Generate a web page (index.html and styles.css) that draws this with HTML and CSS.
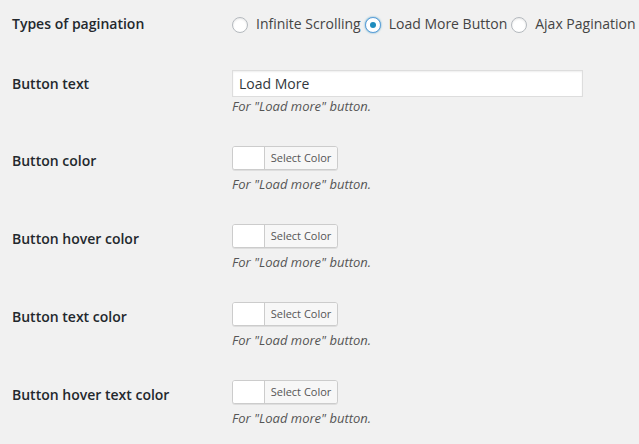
FILE: index.html
```html
<!DOCTYPE html>
<html>
<head>
<meta charset="utf-8">
<link rel="stylesheet" href="styles.css">
</head>
<body>
<div class="form-table">
  <div class="row row-first">
    <div class="th">Types of pagination</div>
    <div class="td radios">
      <label class="opt"><span class="radio"></span>Infinite Scrolling</label>
      <label class="opt"><span class="radio checked"></span>Load More Button</label>
      <label class="opt"><span class="radio"></span>Ajax Pagination</label>
    </div>
  </div>
  <div class="row row-text">
    <div class="th">Button text</div>
    <div class="td">
      <div class="input">Load More</div>
      <p class="description">For "Load more" button.</p>
    </div>
  </div>
  <div class="row row-color">
    <div class="th">Button color</div>
    <div class="td">
      <div class="color-result"><span class="swatch"></span><span class="btn-label">Select Color</span></div>
      <p class="description">For "Load more" button.</p>
    </div>
  </div>
  <div class="row row-color">
    <div class="th">Button hover color</div>
    <div class="td">
      <div class="color-result"><span class="swatch"></span><span class="btn-label">Select Color</span></div>
      <p class="description">For "Load more" button.</p>
    </div>
  </div>
  <div class="row row-color">
    <div class="th">Button text color</div>
    <div class="td">
      <div class="color-result"><span class="swatch"></span><span class="btn-label">Select Color</span></div>
      <p class="description">For "Load more" button.</p>
    </div>
  </div>
  <div class="row row-color">
    <div class="th">Button hover text color</div>
    <div class="td">
      <div class="color-result"><span class="swatch"></span><span class="btn-label">Select Color</span></div>
      <p class="description">For "Load more" button.</p>
    </div>
  </div>
</div>
</body>
</html>
```
FILE: styles.css
```css
html, body {
  margin: 0;
  padding: 0;
  background: #f1f1f1;
  font-family: "Open Sans", "Noto Sans", sans-serif;
  font-size: 14px;
  color: #444;
}
.form-table {
  padding-left: 12px;
}
.row {
  display: flex;
  align-items: flex-start;
}
.th {
  width: 220px;
  flex: none;
  padding-top: 15px;
  line-height: 18px;
  font-weight: 600;
  color: #23282d;
}
.td {
  flex: 1;
  padding-top: 10px;
}
.row-first {
  height: 60px;
}
.row-first .td {
  padding-top: 15px;
}
.radios {
  display: flex;
  align-items: center;
  height: 18px;
}
.opt {
  display: flex;
  align-items: center;
  line-height: 18px;
  margin-right: 4px;
  white-space: nowrap;
}
.radio {
  box-sizing: border-box;
  width: 16px;
  height: 16px;
  border-radius: 50%;
  border: 1px solid #b4b9be;
  background: #fff;
  box-shadow: inset 0 1px 2px rgba(0,0,0,0.1);
  margin-right: 8px;
  margin-top: 1px;
  position: relative;
  flex: none;
}
.radio.checked {
  border-color: #5b9dd9;
  box-shadow: 0 0 2px rgba(30,140,190,0.8);
}
.radio.checked::before {
  content: "";
  position: absolute;
  left: 4px;
  top: 4px;
  width: 6px;
  height: 6px;
  border-radius: 50%;
  background: #1e8cbe;
}
.row-text {
  height: 76px;
}
.input {
  box-sizing: border-box;
  width: 351px;
  height: 27px;
  border: 1px solid #ddd;
  background: #fff;
  box-shadow: inset 0 1px 2px rgba(0,0,0,0.07);
  padding: 0 6px;
  line-height: 25px;
  color: #32373c;
}
.description {
  margin: 1px 0 0;
  font-size: 13px;
  font-style: italic;
  line-height: 17px;
  color: #555;
}
.row-color {
  height: 78px;
}
.row-color .th {
  padding-top: 16px;
}
.color-result {
  box-sizing: border-box;
  display: flex;
  width: 106px;
  height: 24px;
  border: 1px solid #ccc;
  border-radius: 3px;
  background: #fff;
  box-shadow: 0 1px 0 rgba(0,0,0,0.08);
  overflow: hidden;
  margin-bottom: 6px;
}
.swatch {
  width: 31px;
  flex: none;
  background: #fff;
}
.btn-label {
  flex: 1;
  border-left: 1px solid #ccc;
  background: #f7f7f7;
  color: #555;
  font-size: 11px;
  line-height: 22px;
  text-align: center;
}
.row-color .description {
  margin-top: 1px;
}
```
